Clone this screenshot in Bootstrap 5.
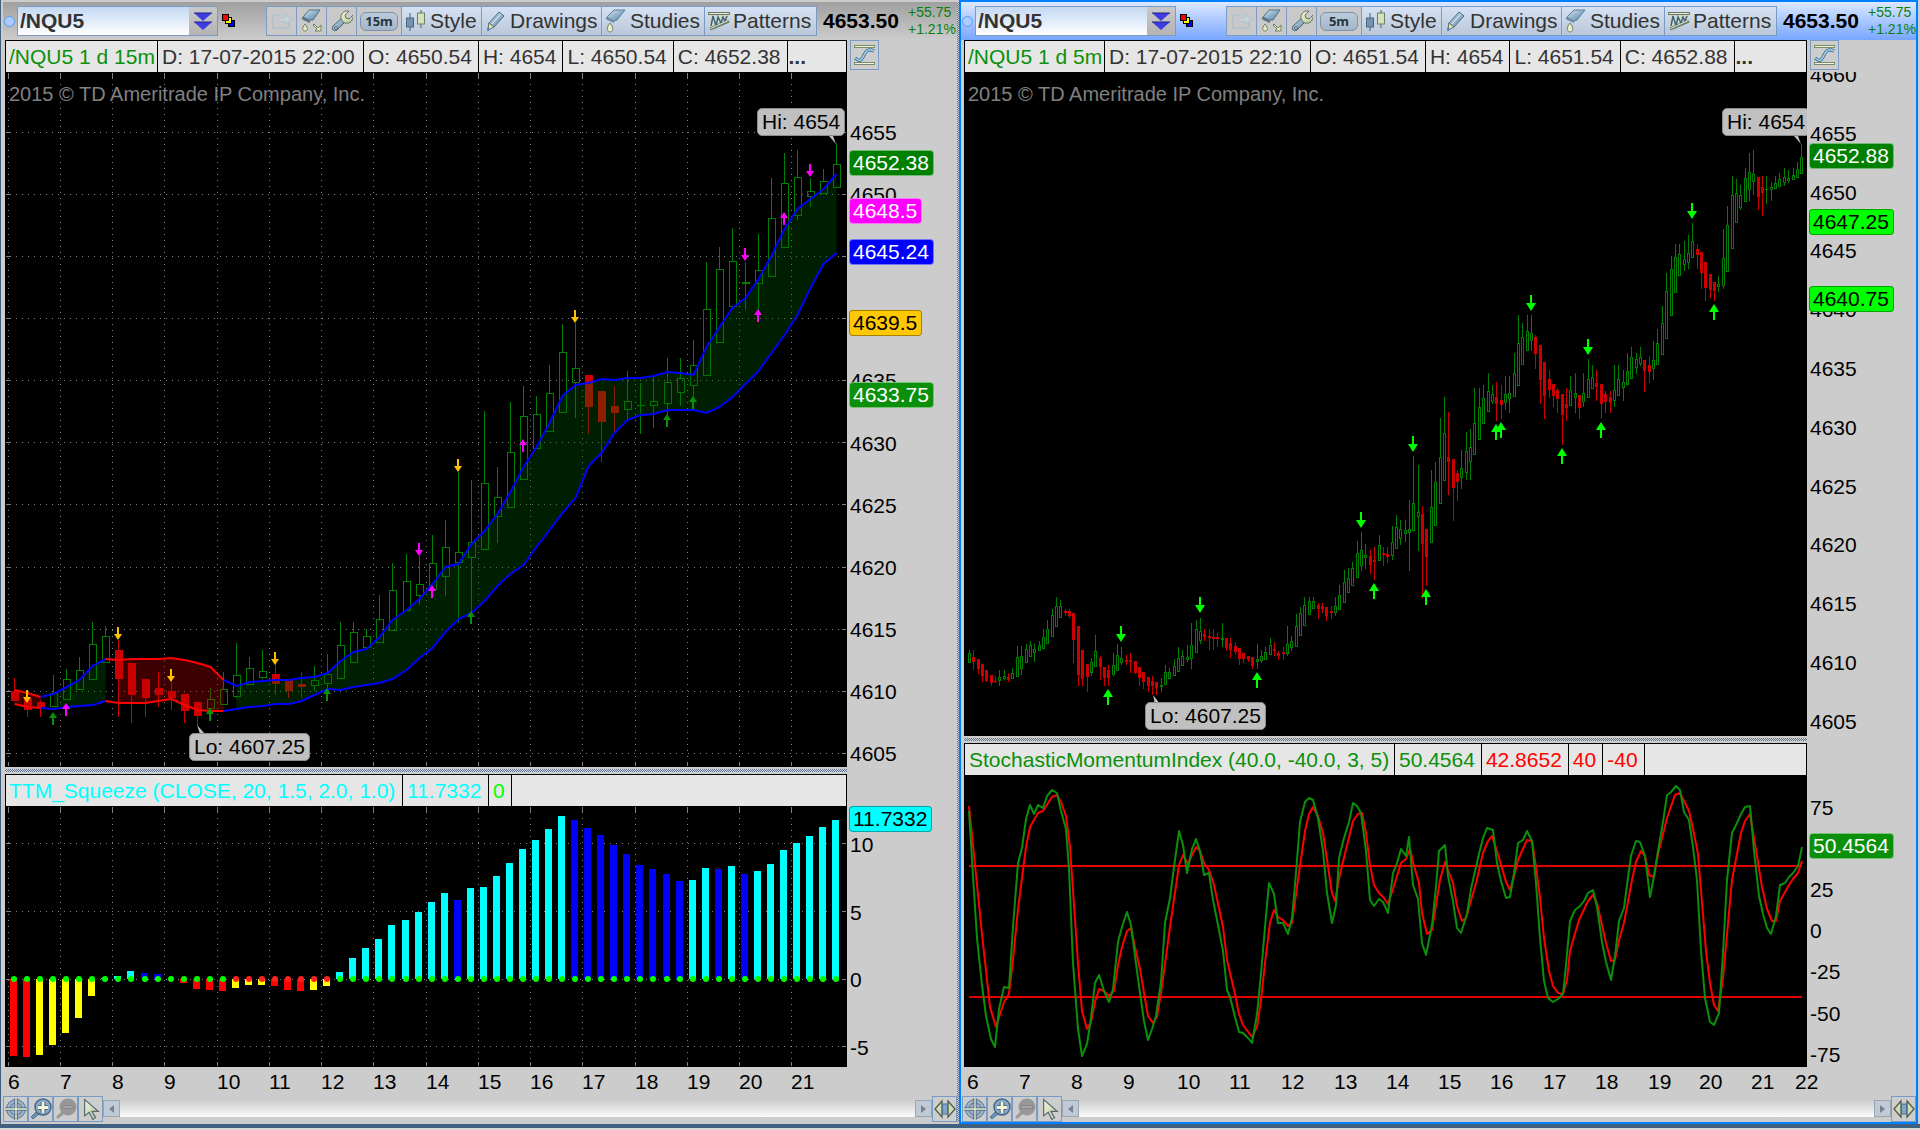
<!DOCTYPE html>
<html lang="en">
<head>
<meta charset="utf-8">
<meta name="viewport" content="width=device-width, initial-scale=1">
<title>/NQU5 charts</title>
<link href="https://cdn.jsdelivr.net/npm/bootstrap@5.3.0/dist/css/bootstrap.min.css" rel="stylesheet">
<style>
:root{--line:#7a9cc4;--face:#cccccc;--frame:#41607f}
body{font-family:"Liberation Sans",Arial,sans-serif;font-size:21px;line-height:24px;color:#333;background:var(--face)}
.desk{min-height:1100px}
.statusline{height:6px;border-top:4px solid var(--frame);border-bottom:2px solid #d8d8d8}
.pane{min-width:0}
.pane-l{width:calc(50% - 1px);flex:none;border-left:1px solid var(--frame);padding:2px 0 2px 4px}
.pane-r{flex:1 1 0;border:2px solid #0080ff;padding-left:3px;margin-right:2px}
.dither{background:repeating-conic-gradient(#5d7592 0 25%,#d4d4d4 0 50%) 0 0/2px 2px}
.edge{width:2px;flex:none}
.toolbar-row{height:38px}
.pane-l .toolbar-row{background:linear-gradient(#a0a0a0,#cccccc);margin-left:-2px;padding:0 1px}
.pane-r .toolbar-row{background:linear-gradient(#dce8ff,#78a6ff);margin-left:-3px;padding-left:1px}
.led{width:11px;height:11px;border-radius:50%;background:#a8ccff;border:1px solid #5c9be8;margin-right:2px}
.symbox{width:201px;height:30px;border:1px solid var(--line)}
.symbox input{flex:1 1 0;width:0;border:0;padding:0 2px;font-weight:700;color:#333;background:linear-gradient(#c3d8f2,#fff);outline:0;min-width:0}
.symbox button{width:28px;flex:none;border:0;padding:0;background:linear-gradient(#c8c8c8,#b4b4b4);display:flex;align-items:center;justify-content:center}
.tool{height:30px;border:1px solid var(--line);border-right-width:0;padding:0;background:#c9c9c9;color:#333;white-space:nowrap;display:flex;align-items:center;justify-content:center}
.tool svg{flex:none}
.tool:last-of-type{border-right-width:1px}
.tool-s{width:30px}.tool-t{width:45px}
.tool-w{justify-content:flex-start;padding-left:3px;gap:3px;background:linear-gradient(#d5e2f5,#bac7d8)}
.w-style{width:80px}.w-draw{width:120px}.w-stud{width:103px}.w-patt{width:113px}
.pill{width:38px;height:19px;border:1px solid #7d93ab;border-radius:6px;background:linear-gradient(#bccbdb,#a3b6c9);font:700 13px/17px "Noto Sans",sans-serif;color:#253540}
.last{font-weight:700;color:#000;margin-left:6px;width:79px}
.chg{font-size:14px;line-height:17px;color:#0a800a;margin-left:6px;width:48px}
.legendbar{height:32px;border:1px solid #000;border-bottom:0;background:#e6e6e6;min-width:0;white-space:nowrap;overflow:hidden;line-height:31px}
.legendbar span{border-right:1px solid #000;padding:0 6px 0 4px}
.legendbar span:last-child{border:0;padding-left:1px;font-weight:700}
.legendbar .l-date{min-width:206px}
.legendbar .l-sym15{min-width:152px;padding:0 0 0 3px}.legendbar .l-sym5{min-width:140px;padding:0 0 0 3px}
.legendbar .l-ttm{min-width:397px;padding:0 0 0 3px}.legendbar .l-smi{min-width:430px;padding:0 0 0 4px}.legendbar .l-val{min-width:86px}
.c-green{color:#0a900a}.c-cyan{color:#00ffff}.c-lime{color:#00ff00}.c-red{color:#ff0000}
.axis{width:110px;flex:none;position:relative;overflow:hidden;color:#000}
.pane-r .axis{width:109px}
.axis span,.times span{position:absolute;white-space:nowrap}
.axis span{left:3px;transform:translateY(-50%)}
.axis .tag{left:2px;height:26px;line-height:24px;padding:0 4px 0 3px;border:1px solid rgba(255,255,255,.45);border-radius:4px}
.axis .tag-dk{border-color:rgba(0,0,0,.35)}
.autoscale{width:29px;height:30px;margin-left:3px;padding:0;border:1px solid var(--line);background:#cdcdcd}
.plot{flex:1 1 0;min-width:0;position:relative;overflow:hidden;background:#000}
.plot>svg{position:absolute;inset:0;width:100%;height:100%}
.mark15{color:#808080;font-size:20px;position:relative;padding:10px 0 0 4px}
.callout{position:absolute;height:28px;line-height:26px;padding:0 4px;border:1px solid #8c8c8c;border-radius:5px;background:#c0c0c0;color:#000;white-space:nowrap}
.g695{flex:695 1 0}.g261{flex:261 1 0}.g664{flex:664 1 0}.g292{flex:292 1 0}
.splitter{height:7px;padding:2px 0 2px}
.splitter .dither{height:3px}
.times{height:29px;position:relative;color:#000}
.times span{top:3px}
.footer-row{height:26px;margin-left:-2px}
.navbtn{width:25px;height:26px;padding:0;border:1px solid var(--line);background:#cdcdcd;display:flex;align-items:center;justify-content:center}
.scrolltrack{height:17px;margin-top:4px;background:linear-gradient(#cccccc,#fbfbfb)}
.scrolltrack button{width:17px;height:17px;border:1px solid #9aa5b4;background:#c0cad6;padding:0;display:flex;align-items:center;justify-content:center}
</style>
<script src="https://cdn.jsdelivr.net/npm/bootstrap@5.3.0/dist/js/bootstrap.bundle.min.js"></script>
</head>
<body>
<svg width="0" height="0" class="position-absolute" aria-hidden="true">
 <defs>
  <linearGradient id="steel" x1="0" y1="0" x2="1" y2="1"><stop offset="0" stop-color="#dcecf6"/><stop offset=".5" stop-color="#8fb0c9"/><stop offset="1" stop-color="#5d7e9a"/></linearGradient>
  <linearGradient id="leaf" x1="0" y1="0" x2="1" y2="1"><stop offset="0" stop-color="#f2f6e0"/><stop offset="1" stop-color="#b5c49a"/></linearGradient>
  <symbol id="i-share" viewBox="0 0 22 20"><path d="M8 4H2v13h16v-6" fill="none" stroke="#b4c4cf" stroke-width="2"/><path d="M7 12c0-4 3-6 7-6V3l6 5-6 5v-3c-3 0-5 0-7 2z" fill="#c6d3da" stroke="#b1c2cd"/></symbol>
  <symbol id="i-flask" viewBox="0 0 22 24"><path d="M2 8 8 1h11l-7 10-4 0z" fill="url(#steel)" stroke="#536f86"/><path d="M1 9l8 4" stroke="#536f86" stroke-width="2"/><path d="M4 15c-4 5-2 7 0 7s4-2 0-7z" fill="#e5edcf" stroke="#70805c"/><path d="M13 15l4 4 3-3v6h-6l2-2-4-4z" fill="#dfe8c2" stroke="#70805c"/></symbol>
  <symbol id="i-wrench" viewBox="0 0 22 24"><path d="M2 17 11 9l4 3-9 9c-4 2-6-1-4-4z" fill="url(#steel)" stroke="#4b6377"/><path d="M10 10c-1-5 3-9 8-8l-4 4 1 3 3 1 4-4c1 5-3 9-8 8l-2-1z" fill="url(#leaf)" stroke="#66755a"/><circle cx="5" cy="19" r="1.4" fill="#dce8f0" stroke="#4b6377"/></symbol>
  <symbol id="i-style" viewBox="0 0 22 22"><path d="M5 3v18M16 0v18" stroke="#4d5f6e"/><rect x="1.500" y="8" width="7" height="9" fill="#7593b0" stroke="#4b6782"/><rect x="12.500" y="3" width="7" height="11" fill="#d5e3bd" stroke="#6e8062"/></symbol>
  <symbol id="i-pencil" viewBox="0 0 22 22"><path d="M4 13 14 2l5 4L9 17l-6 2z" fill="url(#steel)" stroke="#4f6e88"/><path d="M4 13l5 4-6 3z" fill="#dfe8c2" stroke="#66755a"/><path d="M7 14 16 4" stroke="#eaf4fb"/><path d="M2 21l1-3 2 2z" fill="#1978d8"/></symbol>
  <symbol id="i-study" viewBox="0 0 22 24"><path d="M2 8 9 1h11l-8 10-4 1z" fill="url(#steel)" stroke="#5b7d99"/><path d="M1 9l8 4" stroke="#6a8ba5" stroke-width="2"/><path d="M5 14c-5 6-2 9 0 9s5-3 0-9z" fill="#e5edcf" stroke="#70805c"/></symbol>
  <symbol id="i-pattern" viewBox="0 0 22 20"><path d="M2 3v15l19-8V3z" fill="#d3dbc8"/><path d="M3 15 5 5l3 10 2-9 3 6 2-6 2 4 2-5" fill="none" stroke="#3f607e" stroke-width="1.500"/><path d="M0 2.500h22M2 18l19-8" stroke="#6b7a68" stroke-width="3"/><path d="M1 2.500h20M2.500 17.500l18-8" stroke="#e3ead0" stroke-width="1"/></symbol>
  <symbol id="i-auto" viewBox="0 0 22 22"><rect x=".5" y="1.500" width="20" height="2" fill="#f1f4dd" stroke="#7c8a6c"/><rect x=".5" y="18.500" width="20" height="2" fill="#f1f4dd" stroke="#7c8a6c"/><path d="M1 14c6 5 7 1 9-3s4-7 10-4" fill="none" stroke="#3d6a8f" stroke-width="3.200"/><path d="M1 14c6 5 7 1 9-3s4-7 10-4" fill="none" stroke="#a8d8f0" stroke-width="1.500"/></symbol>
  <symbol id="i-stack" viewBox="0 0 14 14"><g stroke="#000"><rect x="6.500" y="6.500" width="6" height="6" fill="#0000ff"/><rect x="3.500" y="3.500" width="6" height="6" fill="#ffff00"/><rect x=".5" y=".5" width="6" height="6" fill="#ff0000"/></g></symbol>
  <symbol id="i-dbl" viewBox="0 0 18 19"><path d="M0 1h18L9 9zM0 10h18l-9 8z" fill="#3c3ce0"/><path d="M0 1h18M0 10h18" stroke="#23238c"/></symbol>
  <symbol id="i-cross" viewBox="0 0 22 22"><circle cx="11" cy="11" r="9.500" fill="#9fb4c9" stroke="#587292"/><circle cx="11" cy="11" r="6" fill="none" stroke="#6f8dab" stroke-width="1.500"/><path d="M11 0v22M0 11h22" stroke="#40566c" stroke-width="3"/><path d="M11 0v22M0 11h22" stroke="#eef3da" stroke-width="1.400"/></symbol>
  <symbol id="i-zin" viewBox="0 0 22 22"><path d="M7 13l-6 6 2 2 6-5z" fill="#6b93b7" stroke="#4f7697"/><circle cx="13" cy="9" r="8" fill="#8cabc8" stroke="#44668a" stroke-width="1.500"/><path d="M13 4v11M8 9.500h10" stroke="#41586c" stroke-width="4.600"/><path d="M13 4v11M8 9.500h10" stroke="#f0f5dc" stroke-width="2.800"/></symbol>
  <symbol id="i-zout" viewBox="0 0 22 22"><path d="M7 13l-6 6 2 2 6-5z" fill="#9a9a9a"/><circle cx="13" cy="9" r="8.500" fill="#979797"/><rect x="7.500" y="7.500" width="11" height="3" fill="#a6a6a6" stroke="#868686"/></symbol>
  <symbol id="i-arrow" viewBox="0 0 22 24"><path d="M4 1v18l5-4 4 8 3-2-4-7h7z" fill="url(#leaf)" stroke="#566a72" stroke-width="1.300"/></symbol>
  <symbol id="i-expand" viewBox="0 0 22 20"><path d="M8 2v16L1 10zM14 2v16l7-8z" fill="#cfdcb4" stroke="#4e5d48" stroke-width="1.300"/><rect x="8.500" y="5" width="5" height="10" fill="#7fa4cd" stroke="#4f6e90"/></symbol>
 </defs>
</svg>

<div class="desk vh-100 d-flex flex-column">
 <main class="d-flex flex-grow-1">
  <section class="pane pane-l d-flex" aria-label="15 minute chart">
   <div class="d-flex flex-column flex-grow-1" id="paneL"></div>
   <div class="edge dither"></div>
  </section>
  <section class="pane pane-r d-flex" aria-label="5 minute chart">
   <div class="d-flex flex-column flex-grow-1" id="paneR"></div>
  </section>
 </main>
 <div class="statusline"></div>
</div>

<script>
const icon=(n,w,h)=>`<svg width="${w}" height="${h}" aria-hidden="true"><use href="#i-${n}"/></svg>`;
const cell=(t,c='')=>`<span class="${c}">${t}</span>`;

function paneHTML(o){
 return `
 <div class="toolbar-row d-flex align-items-center">
  <span class="led"></span>
  <div class="symbox d-flex"><input id="${o.id}sym" aria-label="Symbol" value="/NQU5"><button type="button" aria-label="Symbol list">${icon('dbl',18,19)}</button></div>
  <span class="ms-1 me-auto d-flex">${icon('stack',14,14)}</span>
  <button type="button" class="tool tool-s" aria-label="Share">${icon('share',22,20)}</button>
  <button type="button" class="tool tool-s" aria-label="Study set">${icon('flask',22,24)}</button>
  <button type="button" class="tool tool-s" aria-label="Settings">${icon('wrench',22,24)}</button>
  <button type="button" class="tool tool-t"><span class="pill">${o.tf}</span></button>
  <button type="button" class="tool tool-w w-style">${icon('style',22,22)}Style</button>
  <button type="button" class="tool tool-w w-draw">${icon('pencil',22,22)}Drawings</button>
  <button type="button" class="tool tool-w w-stud">${icon('study',22,24)}Studies</button>
  <button type="button" class="tool tool-w w-patt">${icon('pattern',22,20)}Patterns</button>
  <span class="last">4653.50</span>
  <span class="chg">+55.75<br>+1.21%</span>
 </div>
 <div class="d-flex"><div class="legendbar d-flex flex-grow-1">${o.head}</div><div class="axis"><button type="button" class="autoscale d-flex align-items-center justify-content-center" aria-label="Auto scale">${icon('auto',22,22)}</button></div></div>
 <div class="d-flex ${o.g1}"><div class="plot" id="${o.id}main"><div class="mark15">2015 © TD Ameritrade IP Company, Inc.</div></div><div class="axis" id="${o.id}ax1"></div></div>
 <div class="d-flex"><div class="splitter flex-grow-1"><div class="dither"></div></div><div class="axis"></div></div>
 <div class="d-flex"><div class="legendbar d-flex flex-grow-1">${o.sub}</div><div class="axis"></div></div>
 <div class="d-flex ${o.g2}"><div class="plot" id="${o.id}sub"></div><div class="axis" id="${o.id}ax2"></div></div>
 <div class="times" id="${o.id}times"></div>
 <div class="footer-row d-flex">
  <button type="button" class="navbtn" aria-label="Crosshair">${icon('cross',22,22)}</button>
  <button type="button" class="navbtn" aria-label="Zoom in">${icon('zin',22,22)}</button>
  <button type="button" class="navbtn" aria-label="Zoom out" disabled>${icon('zout',22,22)}</button>
  <button type="button" class="navbtn" aria-label="Pointer">${icon('arrow',20,23)}</button>
  <div class="scrolltrack d-flex flex-grow-1 justify-content-between"><button type="button" aria-label="Scroll left"><svg width="5" height="8"><path d="M5 0v8L0 4z" fill="#77808c"/></svg></button><button type="button" aria-label="Scroll right"><svg width="5" height="8"><path d="M0 0v8l5-4z" fill="#77808c"/></svg></button></div>
  <button type="button" class="navbtn" aria-label="Expand">${icon('expand',22,20)}</button>
 </div>`;
}
paneL.innerHTML=paneHTML({id:'L',tf:'15m',g1:'g695',g2:'g261',
 head:cell('/NQU5 1 d 15m','l-sym15 c-green')+cell('D: 17-07-2015 22:00','l-date')+['O: 4650.54','H: 4654','L: 4650.54','C: 4652.38','...'].map(t=>cell(t)).join(''),
 sub:cell('TTM_Squeeze (CLOSE, 20, 1.5, 2.0, 1.0)','l-ttm c-cyan')+cell('11.7332','l-val c-cyan')+cell('0','c-lime')+cell('')});
paneR.innerHTML=paneHTML({id:'R',tf:'5m',g1:'g664',g2:'g292',
 head:cell('/NQU5 1 d 5m','l-sym5 c-green')+cell('D: 17-07-2015 22:10','l-date')+['O: 4651.54','H: 4654','L: 4651.54','C: 4652.88','...'].map(t=>cell(t)).join(''),
 sub:cell('StochasticMomentumIndex (40.0, -40.0, 3, 5)','l-smi c-green')+cell('50.4564','l-val c-green')+cell('42.8652','l-val c-red')+cell('40','c-red')+cell('-40','c-red')+cell('')});

/* Candles: colour, high, body top, body bottom, low. */
const C15=`r678,691,701,701 r698,698,710,717 r700,702,707,717 g675,693,706,706 g669,679,699,699 g657,670,689,689 g622,644,679,679 g626,636,662,662
r640,650,679,717 r663,663,695,723 r679,679,698,717 r672,688,695,707 r682,691,698,710 r694,694,711,723 r702,702,716,726 g688,699,708,708
g672,689,704,704 g643,675,696,698 g657,668,684,684 g650,671,677,679 r664,674,684,695 r680,680,691,698 r672,684,687,698 g666,680,685,691
g654,674,683,689 g622,645,678,678 g622,632,662,662 g629,636,647,647 g595,619,642,642 g563,590,630,630 g554,581,610,610 g556,584,595,605
g535,563,589,589 g520,547,576,596 g472,552,562,623 g480,542,557,613 g411,483,549,549 g467,497,516,543 g402,452,507,507 g386,416,479,479
g396,414,448,448 g365,393,431,431 g324,352,412,412 g323,368,382,418 r375,375,407,434 r391,391,422,462 r386,406,413,433 g371,401,409,420
g383,405,405,434 g376,401,405,428 g358,382,403,415 g358,378,392,406 g340,365,385,398 g262,309,375,375 g247,269,342,342 g228,261,306,306
g262,282,283,310 g234,270,283,310 g178,218,276,276 g153,183,247,247 g150,177,215,220 g178,191,196,207 g169,181,193,193 g143,164,187,187`;
const UP=[690,693,697,694,687,680,666,659,660,659,659,659,658,660,663,667,680,686,682,681,680,680,678,677,673,661,652,649,637,620,610,599,584,567,564,544,531,514,492,467,447,423,396,385,383,379,380,378,378,376,372,373,375,347,327,308,298,279,256,229,209,199,189,174];
const DN=[704,707,708,709,707,706,705,701,703,703,703,701,699,705,710,711,711,709,707,706,704,704,701,695,689,690,687,685,683,679,670,658,648,632,619,613,601,586,574,565,547,530,513,498,466,453,433,420,415,414,410,410,410,413,407,397,384,371,353,335,315,288,264,253];
const TTM=`r1056 r1057 y1055 y1045 y1033 y1018 y996 c978 c976 c971 b973 b974 b978 r983 r989 r990 r991 y988 y985 y985 r986 r990 r991 y990 y986 c972 c958 c948 c939 c925 c920 c912 c902 c893 b900 c888 c887 c876 c863 c849 c840 c829 c816 b820 b828 b835 b845 b854 b865 b869 b874 b881 c880 c868 b869 c866 b874 c871 c864 c850 c843 c836 c827 c820`;
const C5=`g650,653,662,662 r650,657,662,670 r659,659,669,674 r664,664,676,682 r670,670,681,682 r675,675,683,686 r676,681,682,683 g670,677,680,686
g670,676,678,680 r673,677,680,682 g668,673,678,678 g646,657,676,676 g646,656,668,675 g644,649,662,662 g641,645,656,656 g644,649,652,662
g641,645,650,650 g629,637,648,648 g620,629,643,643 g609,615,636,636 g597,606,626,626 g600,606,617,617 r609,611,613,616 r609,611,616,618
r613,613,640,663 r626,626,675,686 r650,650,679,686 r664,664,677,692 g658,662,672,676 g635,651,666,666 r656,658,667,680 r667,667,678,686
r665,670,678,686 g653,665,674,676 g644,655,670,670 g647,658,662,665 r655,660,662,665 r653,660,662,673 r661,661,673,674 r667,667,678,686
r672,672,682,689 r677,677,686,692 r676,681,686,695 r682,682,688,695 g678,685,686,692 g665,672,684,684 g668,672,678,678 g659,666,675,675
g647,658,671,671 g650,656,665,665 g645,657,659,662 g623,645,658,669 g620,629,652,652 g618,631,640,644 r629,634,637,641 r629,636,638,650
r629,637,639,650 r633,637,639,647 g623,638,639,647 r638,638,648,651 r638,643,650,658 r642,646,652,655 r648,648,659,665 r653,653,659,663
r656,656,660,662 r657,657,666,669 g644,659,661,669 g650,656,660,663 g647,652,659,659 g638,645,654,654 r642,649,651,656 r651,653,656,660
r647,652,654,660 g626,644,653,656 g636,641,647,651 g614,626,646,646 g607,613,635,635 g597,605,625,625 g597,601,614,614 g597,601,608,608
r603,605,609,619 r603,606,609,613 r607,607,616,621 r606,611,613,619 g597,606,612,616 g585,595,609,609 g570,582,602,602 g568,578,592,592
g562,568,585,585 g541,553,577,577 g532,550,565,571 g544,555,557,569 r550,556,565,574 r547,560,562,580 g535,545,560,560 r547,553,555,566
r547,554,557,563 g526,542,555,560 g515,527,548,548 g520,529,538,545 g520,530,533,542 g500,529,532,571 g456,503,530,530 g465,512,516,551
r506,514,544,598 r529,529,557,586 g470,507,542,542 g462,482,525,525 g418,457,503,503 g397,433,480,480 r412,457,462,495 r459,459,488,521
r470,473,482,501 g450,468,477,489 g432,451,472,480 g429,447,461,480 g388,423,454,454 g388,407,439,439 g385,398,423,423 g373,391,411,411
g385,394,401,404 r382,397,404,421 r385,400,405,419 g376,394,402,410 g376,393,398,413 g353,373,396,396 g315,343,385,385 g323,337,364,364
g315,331,350,350 g315,333,340,351 r335,337,354,369 r345,345,380,404 r362,362,396,419 r370,379,390,398 r384,384,396,407 r388,390,399,413
r394,394,415,445 r388,404,408,421 g376,390,405,405 g373,393,397,413 r395,395,408,419 g373,393,401,407 g359,379,397,397 g365,377,388,388
r370,383,387,401 r384,384,404,419 r391,394,402,413 r391,397,403,413 g365,390,400,407 g365,379,395,395 g370,382,387,401 g353,371,384,384
g347,357,378,378 g353,359,367,374 g347,357,363,366 r360,360,371,392 r356,365,372,383 g341,360,368,380 g329,343,364,364 g306,323,354,354
g273,291,338,338 g256,269,315,315 g244,257,292,292 g244,254,275,275 g241,259,264,271 g235,253,262,269 g223,241,257,257 r244,249,255,269
r252,252,273,289 r262,262,288,301 r274,274,290,298 r282,282,291,301 g276,284,286,292 g229,258,285,289 g206,225,271,271 g176,195,248,248
g179,193,222,222 g185,195,207,210 g168,178,201,201 g153,172,189,201 g150,174,181,195 r177,177,197,210 r176,187,193,216 g176,189,189,204
g182,187,189,201 g176,183,188,188 g173,179,186,186 g168,177,182,186 g170,178,180,183 g168,175,179,179 g162,169,177,177 g144,157,173,173`;
const SMI=`969,811 973,876 977,938 982,985 986,1016 991,1039 995,1047 999,1009 1004,987 1009,988 1013,927 1018,863 1022,848 1026,819 1030,805 1034,814 1038,805 1043,808 1047,796 1052,790 1057,793 1061,811 1066,829 1069,869 1073,963 1078,1029 1082,1056 1087,1044 1091,1018 1095,983 1099,975 1104,991 1109,1002 1113,989 1118,942 1122,927 1127,912 1131,925 1135,956 1140,993 1144,1021 1148,1040 1152,1029 1156,1016 1161,982 1165,923 1170,898 1174,867 1179,831 1183,845 1187,873 1192,849 1196,839 1200,851 1204,875 1209,873 1213,900 1218,925 1223,951 1227,990 1230,997 1235,1017 1239,1032 1243,1033 1248,1038 1252,1043 1257,1014 1261,974 1265,927 1269,883 1274,894 1278,923 1283,923 1288,934 1292,918 1296,873 1300,822 1305,802 1309,798 1313,800 1318,818 1323,851 1327,893 1332,923 1336,905 1339,858 1344,838 1349,822 1353,803 1357,806 1361,813 1366,851 1370,900 1374,906 1379,899 1383,902 1388,913 1393,873 1397,863 1401,849 1406,856 1409,837 1413,885 1418,899 1422,943 1426,955 1432,925 1436,887 1439,851 1445,845 1448,876 1453,901 1457,928 1461,933 1467,914 1471,889 1476,867 1479,854 1483,838 1487,828 1493,830 1497,863 1501,881 1506,898 1510,897 1514,873 1518,843 1523,840 1527,831 1532,841 1536,883 1540,938 1544,981 1548,998 1553,1002 1558,999 1563,994 1566,965 1570,921 1575,910 1580,906 1584,901 1588,893 1593,890 1597,907 1602,942 1606,962 1611,980 1615,956 1619,921 1624,908 1627,885 1631,856 1636,841 1640,842 1645,856 1650,897 1654,876 1658,851 1663,822 1667,795 1671,792 1676,786 1680,790 1684,812 1689,820 1693,847 1697,880 1701,951 1705,998 1710,1022 1714,1025 1719,1013 1723,953 1727,880 1732,833 1737,823 1741,814 1745,807 1750,806 1754,851 1759,896 1763,914 1767,928 1771,934 1776,916 1780,885 1785,883 1789,877 1793,873 1798,866 1802,847`;
const SIG=`969,806 975,865 982,934 990,1007 996,1027 1004,1002 1009,994 1013,960 1018,909 1026,847 1030,827 1038,813 1043,811 1048,803 1052,797 1057,795 1061,802 1066,816 1070,847 1074,905 1078,963 1082,1011 1087,1029 1091,1022 1095,1002 1099,989 1104,991 1109,996 1114,991 1118,965 1122,947 1127,931 1131,928 1135,947 1140,969 1144,993 1148,1016 1153,1023 1157,1017 1161,993 1170,927 1179,865 1183,855 1188,864 1192,855 1196,847 1200,851 1204,863 1209,870 1214,885 1223,927 1227,960 1235,994 1239,1014 1243,1025 1252,1037 1257,1027 1261,1000 1265,963 1270,923 1274,910 1278,917 1283,920 1288,926 1292,923 1297,887 1305,831 1309,814 1313,807 1318,816 1323,833 1332,893 1335,901 1340,874 1353,821 1358,814 1362,813 1366,833 1370,865 1374,885 1379,893 1384,898 1388,904 1393,889 1401,863 1406,859 1410,849 1414,866 1419,883 1422,913 1427,934 1432,930 1440,880 1445,862 1453,883 1457,906 1462,921 1466,918 1476,883 1483,853 1488,841 1492,836 1497,851 1506,882 1510,890 1514,877 1518,860 1527,840 1532,841 1536,867 1540,898 1544,938 1549,971 1553,986 1558,993 1563,994 1567,980 1570,951 1579,920 1588,901 1593,895 1597,903 1606,943 1611,961 1615,960 1619,940 1624,923 1632,880 1636,862 1641,851 1645,856 1649,875 1654,877 1658,854 1667,818 1675,795 1680,793 1689,811 1693,829 1698,854 1706,951 1710,983 1714,1005 1718,1011 1723,978 1732,880 1741,833 1745,821 1750,814 1754,838 1762,887 1767,909 1772,921 1776,921 1780,901 1789,885 1793,879 1798,873 1802,861`;

const xL=i=>Math.floor(14.5+13.05*i), xR=i=>Math.floor(969.4+4.358*i);
const put=(id,b,s)=>document.getElementById(id).insertAdjacentHTML('afterbegin',`<svg viewBox="${b.join(' ')}" preserveAspectRatio="none" aria-hidden="true">${s}</svg>`);
function candles(str,xf,half,wid){
 return '<g shape-rendering="crispEdges">'+str.trim().split(/\s+/).map((t,i)=>{
  const [h,a,b,l]=t.slice(1).split(',').map(Number),x=xf(i),c=t[0]=='g'?'#008000':'#cc0000';
  if(t[0]=='r')return `<rect x="${x}" y="${h}" width="1" height="${l-h}" fill="${c}"/><rect x="${x-half}" y="${a}" width="${wid}" height="${b-a}" fill="${c}"/>`;
  return `<rect x="${x}" y="${h}" width="1" height="${a-h}" fill="${c}"/><rect x="${x}" y="${b}" width="1" height="${l-b}" fill="${c}"/>`+
   (a==b?`<rect x="${x-half}" y="${a}" width="${wid}" height="1" fill="${c}"/>`:`<rect x="${x-half+.5}" y="${a+.5}" width="${wid-1}" height="${b-a}" fill="none" stroke="${c}"/>`);
 }).join('')+'</g>';
}
/* d = 1 points up from y, d = -1 points down to y */
function arrow(x,y,d,c,w,head,len){return `<path fill="${c}" d="M${x} ${y}l${w} ${d*head}h${1-w}v${d*(len-head)}h-2v${-d*(len-head)}h${1-w}z"/>`;}
function grid(xs,ys,x0,x1,y0,y1){
 let s='<g stroke="#808080" shape-rendering="crispEdges">';
 xs.forEach(x=>{x+=.5;s+=`<path stroke-dasharray="1 5" d="M${x} ${y0+6}V${y1-6}"/><path d="M${x} ${y0+1}v5M${x} ${y1-5}v4"/>`});
 ys.forEach(y=>{y+=.5;s+=`<path stroke-dasharray="1 5" d="M${x0+5} ${y}H${x1-5}"/><path d="M${x0+1} ${y}h5M${x1-5} ${y}h4"/>`});
 return s+'</g>';
}
const hours=[8,60,112,164,217,269,321,373,426,478,530,582,635,687,739,791];
const seg=(a,f,t)=>a.slice(f,t+1).map((y,k)=>`${xL(f+k)+.5},${y}`);
const band=(f,t,c)=>`<polygon fill="${c}" points="${seg(UP,f,t).concat(seg(DN,f,t).reverse()).join(' ')}"/>`;
const ln=(f,t,c)=>[UP,DN].map(a=>`<polyline fill="none" stroke="${c}" stroke-width="2" points="${seg(a,f,t).join(' ')}"/>`).join('');
const G='rgba(0,100,0,.3)',R='rgba(200,0,0,.3)';
let s=grid(hours,[132,194,256,318,380,442,504,567,629,691,753],5,847,72,767)+candles(C15,xL,3,8)
 +band(0,2,R)+band(3,7,G)+band(8,16,R)+band(17,63,G)+ln(2,7,'#0000ff')+ln(16,63,'#0000ff')+ln(0,2,'#ff0000')+ln(7,16,'#ff0000');
const aL=(l,d,c)=>l.forEach(([i,y])=>s+=arrow(xL(i),y,d,c,4,6,13));
aL([[1,703],[8,640],[12,682],[20,665],[34,472],[43,323]],-1,'#ffc000');
aL([[4,703],[32,585],[39,439],[57,309],[59,212]],1,'#ff00ff');
aL([[31,556],[56,261],[61,177]],-1,'#ff00ff');
aL([[3,712],[15,708],[24,688],[35,611],[50,414],[52,396]],1,'#0a900a');
s+='<path fill="#c0c0c0" d="M829 136l7 8-3-8zM197 725l3 9h5z"/>';
put('Lmain',[5,72,842,695],s);

const TC={r:'#ff0000',y:'#ffff00',c:'#00ffff',b:'#0000ff'};
s=grid(hours,[843,911,979,1046],5,847,806,1067)+'<g shape-rendering="crispEdges">'+TTM.split(' ').map((t,i)=>{const y=+t.slice(1);return `<rect x="${xL(i)-4}" y="${Math.min(y,979)}" width="7" height="${Math.abs(y-979)}" fill="${TC[t[0]]}"/>`}).join('')+'</g>';
for(let i=0;i<64;i++)s+=`<circle cx="${xL(i)}" cy="979" r="3" fill="${i>16&&i<25?'#ff2020':'#00ff00'}"/>`;
put('Lsub',[5,806,842,261],s);

s=candles(C5,xR,1,3);
[[53,613],[35,642],[90,528],[102,452],[129,311],[142,355],[166,219]].forEach(([i,y])=>s+=arrow(xR(i),y,-1,'#00ff00',5,8,16));
[[32,689],[66,672],[93,583],[105,589],[121,424],[122,422],[136,448],[145,422],[171,304],[43,699]].forEach(([i,y])=>s+=arrow(xR(i),y,1,'#00ff00',5,8,16));
s+='<path fill="#c0c0c0" d="M1794 136l7 8-3-8zM1153 695l2 9h5z"/>';
put('Rmain',[964,72,843,664],s);
s='<g stroke-width="2" fill="none" stroke-linejoin="round"><path stroke="#e60000" d="M969 866H1802M969 997H1802"/>'
 +`<polyline stroke="#ff0000" points="${SIG}"/><polyline stroke="#0a900a" points="${SMI}"/></g>`;
put('Rsub',[964,775,843,292],s);

const call=(id,x,y,b,t)=>document.getElementById(id).insertAdjacentHTML('beforeend',`<div class="callout" style="left:${(x-b[0])/b[2]*100}%;top:${(y-b[1])/b[3]*100}%">${t}</div>`);
call('Lmain',757,108,[5,72,842,695],'Hi: 4654');call('Lmain',189,733,[5,72,842,695],'Lo: 4607.25');
call('Rmain',1722,108,[964,72,843,664],'Hi: 4654');call('Rmain',1145,702,[964,72,843,664],'Lo: 4607.25');

function axis(id,y0,h,labels,tags=[]){
 document.getElementById(id).innerHTML=labels.map(([t,y])=>`<span style="top:${(y-y0)/h*100}%">${t}</span>`).join('')
  +tags.map(([t,y,bg,dark])=>`<span class="tag ${dark?'tag-dk':''}" style="top:${(y-y0)/h*100}%;background:${bg};color:${dark?'#000':'#fff'}">${t}</span>`).join('');
}
const scale=(hi,n,step,y,dy)=>Array.from({length:n},(_,i)=>[hi-step*i,y+dy*i]);
axis('Lax1',72,695,scale(4655,11,5,133,62.1),[['4652.38',163,'#008000'],['4648.5',211,'#ff00ff'],['4645.24',252,'#0000ff'],['4639.5',323,'#ffc800',1],['4633.75',395,'#0a900a']]);
axis('Lax2',806,261,scale(10,4,5,845,67.6),[['11.7332',819,'#00ffff',1]]);
axis('Rax1',72,664,scale(4660,12,5,75,58.8),[['4652.88',156,'#008000'],['4647.25',222,'#00ff00',1],['4640.75',299,'#00ff00',1]]);
axis('Rax2',775,292,scale(75,7,25,808,41.1).filter(l=>l[0]!=50),[['50.4564',846,'#0a900a']]);
const times=(id,w,xs)=>document.getElementById(id).innerHTML=xs.map((x,i)=>`<span style="left:${x/w*100}%">${i+6}</span>`).join('');
times('Ltimes',952,hours.map(x=>x-5));
times('Rtimes',952,[3,55,107,159,213,265,317,370,422,474,526,579,631,684,735,787,831]);
</script>
</body>
</html>
